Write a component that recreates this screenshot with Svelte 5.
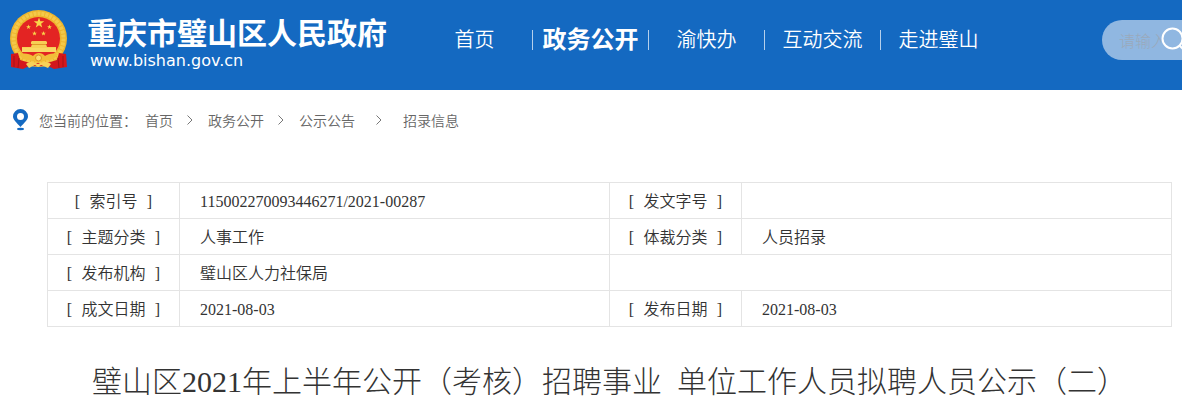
<script>
    const navItems = [
        { name: '首页' },
        { name: '政务公开', active: true },
        { name: '渝快办' },
        { name: '互动交流' },
        { name: '走进璧山' }
    ];

    const crumbs = ['首页', '政务公开', '公示公告', '招录信息'];

    const rows = [
        ['索引号', '115002270093446271/2021-00287', '发文字号', ''],
        ['主题分类', '人事工作', '体裁分类', '人员招录'],
        ['发布机构', '璧山区人力社保局'],
        ['成文日期', '2021-08-03', '发布日期', '2021-08-03']
    ];

    let keyword = '';
</script>

{#snippet label(text)}
    <span class="label"><span>[</span>{text}<span>]</span></span>
{/snippet}

{#snippet star(x, y, r)}
    <path
        transform="translate({x} {y}) scale({r})"
        fill="#f9d64a"
        d="M0-1 .24-.31.95-.31.38.12.59.81 0 .4-.59.81-.38.12-.95-.31-.24-.31Z"
    />
{/snippet}

<header>
    <a class="brand" href="/">
        <svg class="emblem" width="58" height="60" viewBox="0 0 58 60" aria-hidden="true">
            <circle cx="28.500" cy="28.500" r="28.500" fill="#eeb52e" />
            <circle cx="28.500" cy="28.500" r="25" fill="none" stroke="#f4c94a" stroke-width="4" stroke-dasharray="3 1" />
            <circle cx="28.500" cy="28.500" r="21.500" fill="#e32423" />
            <path d="M8 43 10 50 20 53 37 53 47 50 49 43 56 44 57 57 44 59 38 56H19L13 59 1 57 1 44Z" fill="#d3171c" />
            <path d="M4 46v11M9 48l-1 10M53 46v11M48 48l1 10" stroke="#a51319" fill="none" />
            {@render star(29, 13, 5.5)}
            {@render star(18.5, 17, 2.6)}
            {@render star(39.5, 17, 2.6)}
            {@render star(24.5, 23.5, 2.6)}
            {@render star(33.5, 23.5, 2.6)}
            <path d="M21 32l1-1h14l1 1v2h-1l1 3h9v3H12v-3h9l1-3h-1Z" fill="#f7cf55" />
            <path d="M22 34.500h14" stroke="#e09a2a" />
            <path d="M12 38h34v4H12Z" fill="#f9d864" />
            <path d="M9 44c7-1 11 0 14 2 3-4 9-4 12 0 3-2 7-3 13-2-4 6-9 7-14 6-4 3-7 3-11 0-5 1-11 0-14-6Z" fill="#f2bd38" />
            <path d="M16 54c4-3 8-2 12 0 4-2 8-3 13 0l-3 4-7-3-3 2-3-2-6 3Z" fill="#f6d159" />
            <circle cx="28.500" cy="48" r="3" fill="#f9dc6e" stroke="#dc9225" />
        </svg>
        <span class="site">
            <strong>重庆市璧山区人民政府</strong>
            <span class="domain">www.bishan.gov.cn</span>
        </span>
    </a>

    <nav>
        {#each navItems as item}
            <a href="/" class:active={item.active}>{item.name}</a>
        {/each}
    </nav>

    <form class="search">
        <input type="text" placeholder="请输入" aria-label="搜索" bind:value={keyword} />
        <button type="submit" aria-label="搜索">
            <svg width="28" height="28" viewBox="0 0 28 28" fill="none" stroke="#fff" stroke-width="2">
                <circle cx="11.500" cy="12.500" r="10" />
                <path d="M18.500 19.500l7 7" />
            </svg>
        </button>
    </form>
</header>

<div class="crumbs">
    <svg width="16" height="22" viewBox="0 0 16 22" aria-hidden="true">
        <path d="M7.500 0A7.500 7.500 0 0 0 0 7.500C0 11 4 14 7.500 18 11 14 15 11 15 7.500A7.500 7.500 0 0 0 7.500 0Zm0 4a3.500 3.500 0 1 1 0 7 3.500 3.500 0 0 1 0-7Z" fill="#1469c1" fill-rule="evenodd" />
        <ellipse cx="7.500" cy="20" rx="3.500" ry="1.200" fill="#1469c1" />
    </svg>
    <span class="here">您当前的位置：</span>
    {#each crumbs as crumb, i}
        {#if i > 0}
            <svg class="arrow" width="6" height="10" viewBox="0 0 6 10" fill="none" stroke="#777" aria-hidden="true">
                <path d="M.5.5 5 5 .5 9.500" />
            </svg>
        {/if}
        <a href="/">{crumb}</a>
    {/each}
</div>

<main>
    <table>
        <colgroup>
            <col class="name" /><col /><col class="name" /><col />
        </colgroup>
        <tbody>
            {#each rows as row}
                <tr>
                    <th scope="row">{@render label(row[0])}</th>
                    <td>{row[1]}</td>
                    {#if row[2]}
                        <th scope="row">{@render label(row[2])}</th>
                        <td>{row[3]}</td>
                    {:else}
                        <td colspan="2"></td>
                    {/if}
                </tr>
            {/each}
        </tbody>
    </table>

    <h1>璧山区2021年上半年公开（考核）招聘事业&nbsp; 单位工作人员拟聘人员公示（二）</h1>
</main>

<style>
    :global(body) {
        margin: 0;
        background: #fff;
        color: #333;
        font-family: "Liberation Serif", "Noto Sans CJK SC", serif;
        font-size: 16px;
        font-weight: 350;
    }

    a {
        color: inherit;
        text-decoration: none;
    }

    header {
        display: flex;
        align-items: center;
        height: 90px;
        padding-left: 10px;
        background: #1469c1;
        color: #fff;
        overflow: hidden;
    }

    .brand {
        display: flex;
        gap: 19px;
        align-items: center;
        margin-bottom: 10px;
    }

    .site {
        display: flex;
        flex-direction: column;
        padding-top: 2px;
        white-space: nowrap;
    }

    .site strong {
        font: bold 30px/40px "Noto Sans CJK SC", sans-serif;
    }

    .domain {
        padding-left: 3px;
        font: 16px/20px "DejaVu Sans", sans-serif;
    }

    nav {
        display: flex;
        align-items: center;
        flex: none;
        margin-bottom: 10px;
        margin-left: 30px;
    }

    nav a {
        width: 115px;
        border-right: 1px solid #b5d0ec;
        font-size: 20px;
        line-height: 20px;
        text-align: center;
        white-space: nowrap;
    }

    nav a:last-child {
        border-right: 0;
    }

    nav a.active {
        font-size: 24px;
        font-weight: bold;
    }

    .search {
        display: flex;
        align-items: center;
        flex: none;
        width: 80px;
        height: 40px;
        margin-left: auto;
        margin-bottom: 10px;
        border-radius: 20px 0 0 20px;
        background: #90b7e1;
        overflow: hidden;
    }

    .search input {
        flex: none;
        box-sizing: border-box;
        width: 59px;
        height: 40px;
        padding: 0 0 0 17px;
        border: 0;
        outline: 0;
        background: none;
        font: 300 16px "Noto Sans CJK SC", sans-serif;
    }

    .search input::placeholder {
        color: #9aa9bb;
        opacity: 1;
    }

    .search button {
        flex: none;
        display: flex;
        padding: 0;
        border: 0;
        background: none;
        cursor: pointer;
    }

    .crumbs {
        display: flex;
        align-items: center;
        height: 60px;
        padding-left: 13px;
        color: #666;
        font-size: 14px;
        white-space: nowrap;
    }

    .here {
        margin: 0 8px 0 10px;
    }

    .arrow {
        margin: 0 15px 0 14px;
    }

    .arrow:last-of-type {
        margin: 0 21px;
    }

    main {
        margin: 32px 10px 0 47px;
    }

    table {
        width: 100%;
        border-collapse: collapse;
        table-layout: fixed;
    }

    .name {
        width: 132px;
    }

    th,
    td {
        height: 33px;
        padding: 2px 0 0;
        border: 1px solid #e4e4e4;
        line-height: 24px;
        font-weight: inherit;
    }

    td {
        padding-left: 20px;
    }

    .label {
        display: flex;
        justify-content: center;
        gap: 8px;
    }

    .label span {
        width: 8px;
    }

    h1 {
        margin: 32px 0 0;
        font-size: 30px;
        font-weight: 300;
        line-height: 46px;
        text-align: center;
    }
</style>
